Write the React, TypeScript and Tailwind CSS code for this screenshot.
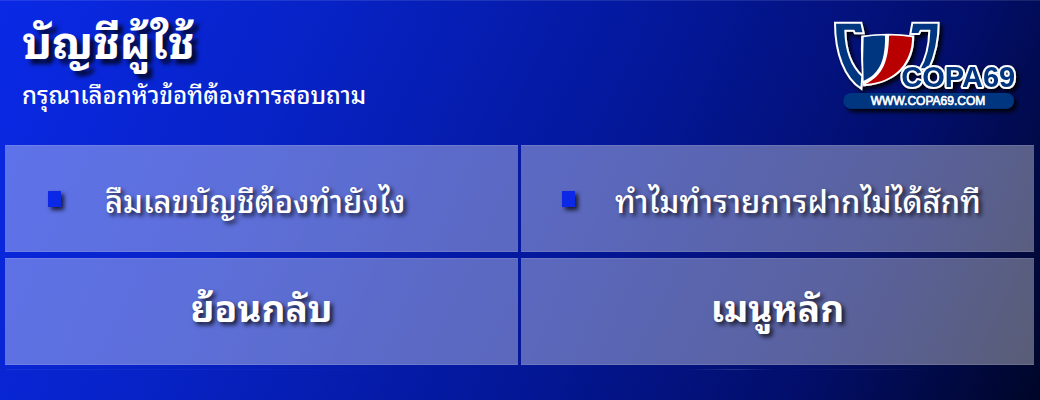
import React from "react";

const cell =
  "flex min-h-[107px] w-full items-center bg-white/35 text-white border-y border-white/10 text-left";
const bullet = "h-4 w-[13px] bg-[#0a28e6] shadow-[3px_3px_4px_rgba(0,0,0,0.75)]";
const topic = "text-[31px] leading-10 font-medium [text-shadow:3px_3px_4px_rgba(0,0,0,0.7)]";
const action =
  "justify-center pb-3 text-[37px] leading-10 font-bold [text-shadow:3px_3px_4px_rgba(0,0,0,0.75)]";

function Logo() {
  return (
    <svg viewBox="0 0 630 330" className="h-[110px] w-[210px]" role="img" aria-label="COPA69">
      <defs>
        <filter id="logoShadow" x="-10%" y="-10%" width="125%" height="130%">
          <feDropShadow dx="9" dy="10" stdDeviation="7" floodColor="#000" floodOpacity="0.9" />
        </filter>
      </defs>
      <g filter="url(#logoShadow)">
        <path d="M45 38H124L131 70H105L101 62H76C77 112 92 165 127 198L124 236C74 205 45 130 45 38Z" fill="#003580" stroke="#fff" strokeWidth="6" />
        <path d="M277 38H356C356 88 347 133 326 178L298 178C318 145 327 105 328 62H302L297 72H271Z" fill="#003580" stroke="#fff" strokeWidth="6" />
        <path d="M126 80Q200 68 280 79C281 154 238 215 132 226Q123 155 126 80Z" fill="#fff" stroke="#fff" strokeWidth="5" />
        <path d="M131 82Q160 76 195 77C196 140 184 190 131 212Q128 145 131 82Z" fill="#003580" />
        <path d="M207 77Q240 76 276 82C277 153 228 218 136 222C190 197 206 150 207 77Z" fill="#b90000" />
        <rect x="70" y="249" width="512" height="47" rx="23" fill="#003580" />
        <text x="244" y="231" fontSize="87" fontWeight="700" fill="#003580" stroke="#fff" strokeWidth="12" strokeLinejoin="round" paintOrder="stroke" className="font-['Liberation_Sans',sans-serif]">COPA69</text>
      </g>
      <text x="324" y="284" textAnchor="middle" fontSize="36" fill="#fff" stroke="#fff" strokeWidth="2" className="font-['Liberation_Sans',sans-serif]">WWW.COPA69.COM</text>
    </svg>
  );
}

export default function App() {
  return (
    <main className="min-h-screen bg-[linear-gradient(115deg,#0a29e6_0%,#0722c4_28%,#04189c_54%,#020e6a_80%,#000628_100%)] font-[Umpush,'Noto_Sans_Thai_Looped',Garuda,Loma,'Noto_Sans_Thai',sans-serif] text-white">
      <header className="flex justify-between border-t border-white/10 pr-2.5">
        <div className="pl-5.5 pt-1.5">
          <h1 className="text-[45px] leading-[64px] font-bold [text-shadow:5px_5px_4px_rgba(0,0,0,0.8)]">บัญชีผู้ใช้</h1>
          <p className="text-2xl leading-11 font-medium">กรุณาเลือกหัวข้อทีต้องการสอบถาม</p>
        </div>
        <div className="h-36 pt-[9px]"><Logo /></div>
      </header>
      <nav className="grid grid-cols-2 gap-x-[3px] gap-y-1.5 pl-[5px] pr-1.5">
        <button className={`${cell} gap-11 pl-[43px]`}>
          <span className={bullet} />
          <span className={topic}>ลืมเลขบัญชีต้องทำยังไง</span>
        </button>
        <button className={`${cell} gap-10 pl-[41px]`}>
          <span className={bullet} />
          <span className={topic}>ทำไมทำรายการฝากไม่ได้สักที</span>
        </button>
        <button className={`${cell} ${action}`}>ย้อนกลับ</button>
        <button className={`${cell} ${action}`}>เมนูหลัก</button>
      </nav>
      <div className="mx-1.5 mt-1 h-px bg-[linear-gradient(90deg,rgba(255,255,255,0.06),transparent_40%,transparent_66%,rgba(255,255,255,0.15)_71%,transparent_75%,rgba(255,255,255,0.06)_84%,transparent_90%)]" />
    </main>
  );
}
